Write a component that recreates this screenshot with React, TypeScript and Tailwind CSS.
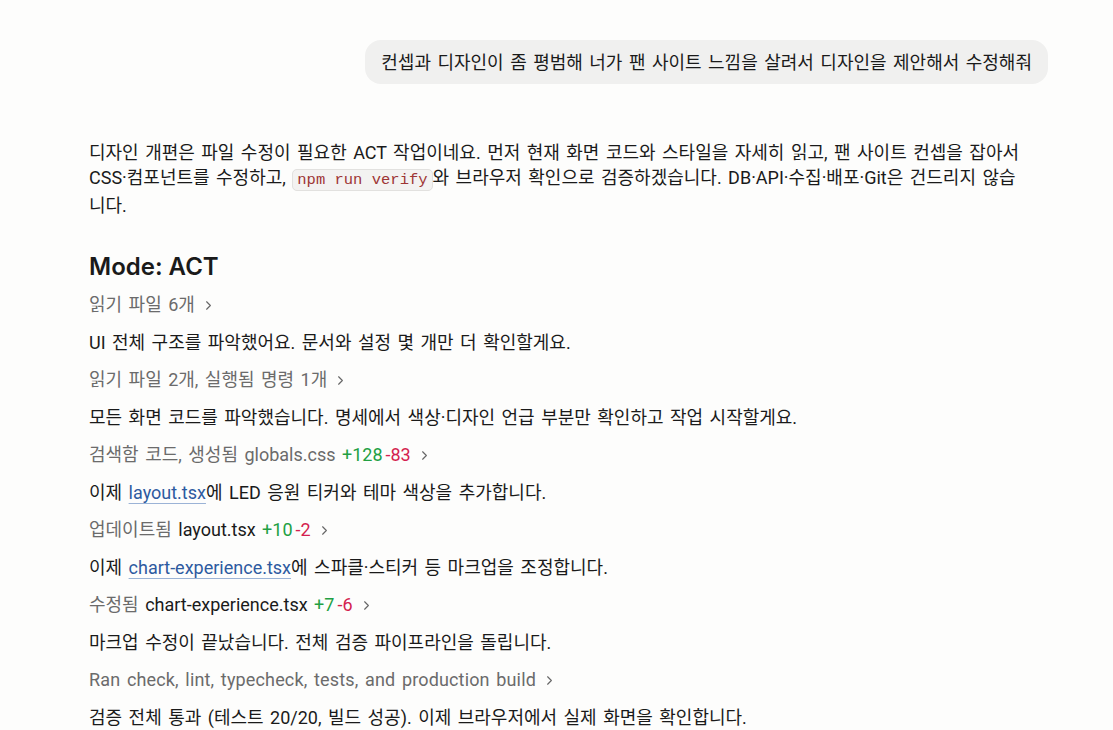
import React from "react";

const font = { fontFamily: 'Roboto, "Noto Sans CJK KR", sans-serif' };

function Chevron() {
  return (
    <svg width="15" height="15" viewBox="0 0 24 24" fill="none" stroke="currentColor" strokeWidth="1.8" strokeLinecap="round" strokeLinejoin="round" className="inline-block ml-[6px] text-[#666] align-[-2px]">
      <path d="M9 6l6 6-6 6" />
    </svg>
  );
}

function Meta({ children, latin }: { children: React.ReactNode; latin?: boolean }) {
  return (
    <div className={latin ? "h-[37.5px] flex items-center text-[#6b6b6b] tracking-[0.15px]" : "h-[37.5px] flex items-center text-[#6b6b6b]"}>
      <span>{children}<Chevron /></span>
    </div>
  );
}

function Line({ children }: { children: React.ReactNode }) {
  return <div className="h-[37.5px] flex items-center text-[#1a1a1a]">{children}</div>;
}

function Link({ children }: { children: React.ReactNode }) {
  return (
    <span className="text-[#2d5aa0] underline decoration-[#9bb3d6] underline-offset-[4px] decoration-1">{children}</span>
  );
}

const Add = ({ n }: { n: string }) => <span className="text-[#22a043]">{n}</span>;
const Del = ({ n }: { n: string }) => <span className="text-[#d41f4f] ml-[3px]">{n}</span>;

export default function App() {
  return (
    <div className="min-h-[730px] w-[1113px] bg-[#fdfdfc] text-[18px] text-[#1a1a1a] overflow-hidden [word-spacing:2px]" style={font}>
      <div className="w-[959px] ml-[89px]">
        <div className="flex justify-end pt-[40px]">
          <div className="bg-[#f0f0ef] rounded-[16px] h-[44px] px-[16px] flex items-center whitespace-nowrap">
            컨셉과 디자인이 좀 평범해 너가 팬 사이트 느낌을 살려서 디자인을 제안해서 수정해줘
          </div>
        </div>
        <p className="mt-[56px] leading-[25px] w-[942px]">
          디자인 개편은 파일 수정이 필요한 ACT 작업이네요. 먼저 현재 화면 코드와 스타일을 자세히 읽고, 팬 사이트 컨셉을 잡아서 CSS·컴포넌트를 수정하고,{" "}
          <code className="font-['Liberation_Mono',monospace] text-[15.5px] [word-spacing:0px] text-[#9e3535] bg-[#f3f2f1] border border-[#e2e1df] rounded-[5px] px-[4px] py-[1px]">npm run verify</code>
          와 브라우저 확인으로 검증하겠습니다. DB·API·수집·배포·Git은 건드리지 않습니다.
        </p>
        <h2 className="mt-[32px] text-[24px] font-semibold leading-[34px] [word-spacing:0px] font-['Inter',sans-serif]">Mode: ACT</h2>
        <div className="mt-[2px]">
          <Meta>읽기 파일 6개</Meta>
          <Line>UI 전체 구조를 파악했어요. 문서와 설정 몇 개만 더 확인할게요.</Line>
          <Meta>읽기 파일 2개, 실행됨 명령 1개</Meta>
          <Line>모든 화면 코드를 파악했습니다. 명세에서 색상·디자인 언급 부분만 확인하고 작업 시작할게요.</Line>
          <Meta>검색함 코드, 생성됨 globals.css <Add n="+128" /><Del n="-83" /></Meta>
          <Line><span>이제 <Link>layout.tsx</Link>에 LED 응원 티커와 테마 색상을 추가합니다.</span></Line>
          <Meta>업데이트됨 <span className="text-[#1a1a1a]">layout.tsx</span> <Add n="+10" /><Del n="-2" /></Meta>
          <Line><span>이제 <Link>chart-experience.tsx</Link>에 스파클·스티커 등 마크업을 조정합니다.</span></Line>
          <Meta>수정됨 <span className="text-[#1a1a1a]">chart-experience.tsx</span> <Add n="+7" /><Del n="-6" /></Meta>
          <Line>마크업 수정이 끝났습니다. 전체 검증 파이프라인을 돌립니다.</Line>
          <Meta latin>Ran check, lint, typecheck, tests, and production build</Meta>
          <Line>검증 전체 통과 (테스트 20/20, 빌드 성공). 이제 브라우저에서 실제 화면을 확인합니다.</Line>
        </div>
      </div>
    </div>
  );
}
